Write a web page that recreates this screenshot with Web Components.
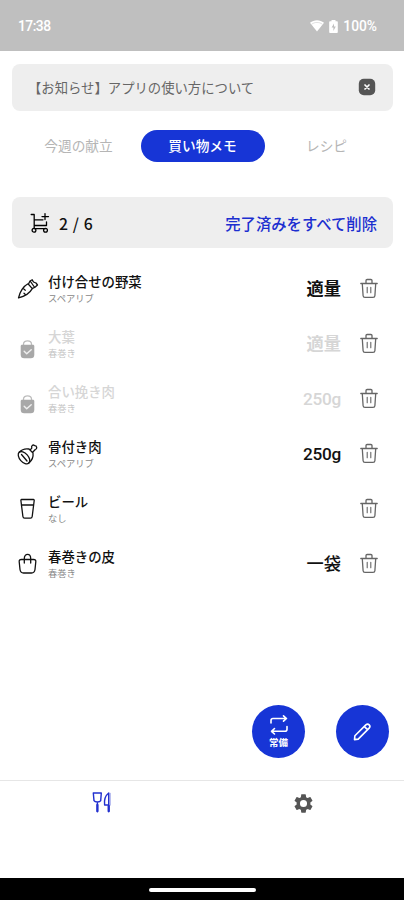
<!DOCTYPE html>
<html lang="ja">
<head>
<meta charset="utf-8">
<title>買い物メモ</title>
<style>
html,body{margin:0;height:100%;background:#fff}
</style>
</head>
<body>
<shopping-app></shopping-app>
<script>
const define = (name, html) => customElements.define(name, class extends HTMLElement {
  constructor() {
    super();
    const t = document.createElement('template');
    t.innerHTML = typeof html === 'function' ? html(this) : html;
    this.attachShadow({ mode: 'open' }).appendChild(t.content.cloneNode(true));
  }
});

const icons = {
  carrot: ['21', '<path d="M1.500 19.800C3 14 6 8.500 11 5.800l4.300 4.800C12.500 15.500 7.500 18.500 1.500 19.800ZM11.500 6l1.500-3 2.200-1.200 1.300 2.200 2.500 1 1.500 2-2 1.800-3 1.500M13.500 3.500l3.500 5M6.800 11l1.500 1.200M8.300 16.500l-1.300-1.300"/>'],
  meat: ['21', '<path d="M2.200 9.300C4.500 6.800 8 5.300 12 6l4 4c.6 4.200-1.300 7.700-4.300 10.200M13.300 6.800l1.500-1.700c-.9-2.400 1.200-4 2.800-2.500 2.500 0 2.900 3.200.7 3.900L15.900 9"/><ellipse cx="7" cy="14.700" rx="7.200" ry="4.300" transform="rotate(48 7 14.700)"/><path d="M4.500 11.500l5.500 6.500"/>'],
  glass: ['21', '<path d="M4.500 1.500h12q.8 0 .7 1l-2 16q-.2 1.700-1.700 1.700H7.600q-1.500 0-1.700-1.700l-2-16q-.1-1 .6-1ZM4.300 7h12.400"/>'],
  bag: ['21', '<path d="M4.300 6.500h12.400c1.400 0 2.300.8 2.100 2.200L18 16.500c-.4 2.800-1.500 3.500-3.500 3.500H6.500C4.500 20 3.400 19.300 3 16.500L2.200 8.700c-.2-1.400.7-2.200 2.100-2.200ZM7.300 10V5.500c0-5.500 6.400-5.500 6.400 0V10"/>'],
  done: ['21', '<path d="M6.500 6.500V5c0-4.200 8-4.200 8 0v1.500" stroke="#bdbdbd"/><path d="M5.200 5.700h10.600c1 0 1.500.5 1.500 1.500v8.600c0 2.400-1.200 3.500-3.500 3.500H7.200c-2.300 0-3.500-1.100-3.500-3.500V7.200c0-1 .5-1.500 1.500-1.500Z" fill="#a8a8a8" stroke="none"/><path d="M7.200 12.300l2.500 2.400 4.500-4" stroke="#eee" stroke-width="1.500"/>'],
  trash: ['20', '<path d="M1.800 5.500h16.400M7 5.200V2.600q0-1.100 1.100-1.100h3.800q1.100 0 1.100 1.100v2.600M3.300 5.700l.8 12q.1 1.700 1.900 1.700h8q1.800 0 1.900-1.700l.8-12"/><path d="M8.200 9.300v5.500M11.800 9.300v5.500" stroke-width="1.100"/>'],
  cart: ['20', '<path d="M1.200 1.500h3v14.200M4.500 6.800h8.500M16.500 8.800v3.700H4.500M4.500 15.700h11M15 .6v6M12 3.600h6.500"/><circle cx="4" cy="17.300" r="1.900"/><circle cx="15.500" cy="17.300" r="1.900"/>'],
  repeat: ['20', '<path d="M2 8V5.500q0-2 2-2h13.500M14.500.8l3 2.700-3 2.700M18 11.500v2.800q0 2-2 2H2.500M5.500 13.500l-3 2.800 3 2.700"/>'],
  pencil: ['20', '<path d="M2 14.500 13.500 3c2.500-2.200 5.700 1 3.500 3.500L5.500 18l-3.900.5ZM12 4.800l3.300 3.300"/>'],
  dining: ['20', '<path d="M1.300 1h8L8.700 8.600Q8 10 5.400 10T2 8.600ZM5.400 10v9.500"/><path d="M5.400 13v6.300M16.700 14v5.300" stroke-width="2.300"/><path d="M16.600 13h-4C12 8 13.500 3.500 16.700 1v18.300"/><path d="M18.200 1.500v11.500" stroke-opacity=".35"/>'],
  gear: ['24', '<path fill="currentColor" stroke="none" fill-rule="evenodd" d="M19.140 12.940c.04-.3.060-.61.060-.94s-.02-.64-.07-.94l2.030-1.580a.49.49 0 0 0 .12-.61l-1.920-3.320a.49.49 0 0 0-.59-.22l-2.390.96a7 7 0 0 0-1.620-.94l-.36-2.540A.48.48 0 0 0 13.920 2.400h-3.840c-.24 0-.43.17-.47.41l-.36 2.540a7.300 7.300 0 0 0-1.620.94l-2.390-.96a.48.48 0 0 0-.59.22L2.740 8.870a.47.47 0 0 0 .12.610l2.030 1.580a6 6 0 0 0-.02 1.880l-2.030 1.580a.49.49 0 0 0-.12.610l1.920 3.320c.12.22.37.29.59.22l2.390-.96c.5.380 1.030.7 1.620.94l.36 2.540c.05.24.24.41.48.41h3.840c.24 0 .44-.17.47-.41l.36-2.540a7.200 7.200 0 0 0 1.620-.94l2.390.96c.22.08.47 0 .59-.22l1.920-3.320a.47.47 0 0 0-.12-.61ZM12 15.700a3.700 3.700 0 1 1 0-7.400 3.700 3.700 0 0 1 0 7.400Z"/>'],
  close: ['18', '<rect x=".8" y=".8" width="16.400" height="16.400" rx="5" fill="#555" stroke="none"/><path d="m7 7 4 4M11 7l-4 4" stroke="#fff" stroke-width="1.700"/>'],
  wifi: ['14', '<path d="M0 3.800C4 .4 10 .4 14 3.800L7 12.500Z" fill="currentColor" stroke="none"/><path d="M1.900 5C5 2.800 9 2.800 12.100 5" stroke="#d2d2d2" stroke-width=".7"/>'],
  battery: ['13', '<path d="M4.500 0h4v1.300H10q.8 0 .8.800v9.800q0 1-.8 1H3q-.8 0-.8-1V2.100q0-.8.8-.8h1.500Z" fill="currentColor" stroke="none"/><path d="M7 3.500 4.600 7.500h1.800V11l2.400-4.500H7Z" fill="#bfbfbf" stroke="none"/>']
};
customElements.define('app-icon', class extends HTMLElement {
  connectedCallback() {
    if (this.shadowRoot) return;
    const [n, body] = icons[this.getAttribute('name')];
    const s = this.getAttribute('size') || n;
    this.attachShadow({ mode: 'open' }).innerHTML = `<style>
      :host{display:block;flex:none;width:${s}px;height:${s}px}svg{display:block;overflow:visible}</style>
      <svg width="${s}" height="${s}" viewBox="0 0 ${n} ${n}" fill="none" stroke="currentColor" stroke-width="${this.getAttribute('stroke') || 1.3}" stroke-linecap="round" stroke-linejoin="round">${body}</svg>`;
  }
});

define('status-bar', `<style>
:host{display:flex;align-items:center;height:51px;padding:1px 27px 0 18px;box-sizing:border-box;background:#bfbfbf;color:#fff;font:500 13.800px Roboto,sans-serif}
.t{flex:1;letter-spacing:-.5px}app-icon{margin-right:3px}</style>
<span class="t">17:38</span><app-icon name="wifi"></app-icon><app-icon name="battery"></app-icon><span>100%</span>`);

define('notice-bar', `<style>
:host{display:flex;align-items:center;justify-content:space-between;height:47px;box-sizing:border-box;margin:13px 11px 0 12px;padding:0 17px 1px 16px;border-radius:8px;background:#eee;color:#666;font-size:13.350px}
span{white-space:nowrap}</style>
<span><slot></slot></span><app-icon name="close"></app-icon>`);

define('tab-item', `<style>
:host{display:flex;align-items:center;justify-content:center;width:124px;height:32px;border-radius:16px;box-sizing:border-box;padding:0 1px 2px 0;color:#b5b5b5;font-size:13.700px}
:host([active]){background:#1735d6;color:#fff;font-weight:500}</style><slot></slot>`);
define('tab-strip', `<style>:host{display:flex;justify-content:center;margin:19px 0 0 2px;height:32px}</style><slot></slot>`);

define('summary-bar', `<style>
:host{display:flex;align-items:center;height:51px;box-sizing:border-box;margin:35px 11px 0 12px;padding:1px 16px 0 18px;border-radius:8px;background:#eee;font-weight:500}
.n{flex:1;margin-left:9px;font-size:15.800px;word-spacing:1.200px;color:#111}.a{font-size:15.350px;color:#1c2fd0}</style>
<app-icon name="cart"></app-icon><span class="n"><slot name="count"></slot></span><span class="a"><slot></slot></span>`);

define('shop-item', el => `<style>
:host{display:flex;align-items:center;height:55px;box-sizing:border-box;padding:0 25px 0 17px;color:#111}
.text{flex:1;margin-left:10px}
.title{font-size:13.400px;line-height:18px;font-weight:500}
.sub{font-size:9.300px;line-height:13px;margin-top:2px;color:#888}
.q{font:500 17.200px/24px Roboto,"Noto Sans CJK JP",sans-serif;margin-right:18px;padding-top:1px}
.trash{color:#666;margin-top:-2px}
.i{margin-top:-1px}
:host([latin]) .q{letter-spacing:-.25px}
:host([heavy]) .q{font-weight:700}
:host([done]) .title,:host([done]) .q{color:#d6d6d6}
:host([done]) .sub{color:#c4c4c4}
:host([done]) .i{margin-top:11px}
</style><app-icon class="i" name="${el.getAttribute('icon')}"></app-icon>
<div class="text"><div class="title"><slot></slot></div><div class="sub"><slot name="recipe"></slot></div></div>
<span class="q"><slot name="qty"></slot></span><app-icon class="trash" name="trash"></app-icon>`);

define('round-button', `<style>
:host{display:flex;flex-direction:column;align-items:center;justify-content:center;gap:1px;width:53px;height:53px;border-radius:50%;background:#1735d6;color:#fff;font-size:9.500px;line-height:13px;font-weight:700}</style><slot></slot>`);

define('bottom-nav', `<style>
:host{display:grid;grid-template-columns:1fr 1fr;height:98px;box-sizing:border-box;border-top:1px solid #e6e6e6;padding-top:11px;justify-items:center}
.d{color:#2230cf;padding-left:2px}.g{color:#555;padding-left:1px}</style>
<app-icon class="d" name="dining" size="20" stroke="1.400"></app-icon><app-icon class="g" name="gear" size="23"></app-icon>`);

define('home-bar', `<style>
:host{display:flex;align-items:center;justify-content:center;height:22px;background:#000}
div{width:107px;height:4px;border-radius:2px;background:#fff;margin:1px 0 0 1px}</style><div></div>`);

define('shopping-app', `<style>
:host{display:flex;flex-direction:column;width:404px;height:900px;overflow:hidden;font-family:"Noto Sans CJK JP",sans-serif}
.list{margin-top:13px;flex:1}
.fabs{display:flex;justify-content:flex-end;gap:31px;padding-right:15px;margin-bottom:22px}
</style>
<status-bar></status-bar>
<notice-bar>【お知らせ】アプリの使い方について</notice-bar>
<tab-strip><tab-item>今週の献立</tab-item><tab-item active>買い物メモ</tab-item><tab-item>レシピ</tab-item></tab-strip>
<summary-bar><span slot="count">2 / 6</span>完了済みをすべて削除</summary-bar>
<div class="list">
<shop-item icon="carrot" heavy>付け合せの野菜<span slot="recipe">スペアリブ</span><span slot="qty">適量</span></shop-item>
<shop-item icon="done" done heavy>大葉<span slot="recipe">春巻き</span><span slot="qty">適量</span></shop-item>
<shop-item icon="done" done latin>合い挽き肉<span slot="recipe">春巻き</span><span slot="qty">250g</span></shop-item>
<shop-item icon="meat" latin>骨付き肉<span slot="recipe">スペアリブ</span><span slot="qty">250g</span></shop-item>
<shop-item icon="glass">ビール<span slot="recipe">なし</span></shop-item>
<shop-item icon="bag">春巻きの皮<span slot="recipe">春巻き</span><span slot="qty">一袋</span></shop-item>
</div>
<div class="fabs"><round-button><app-icon name="repeat" stroke="1.600"></app-icon>常備</round-button><round-button><app-icon name="pencil" size="19" stroke="1.700"></app-icon></round-button></div>
<bottom-nav></bottom-nav><home-bar></home-bar>`);
</script>
</body>
</html>
